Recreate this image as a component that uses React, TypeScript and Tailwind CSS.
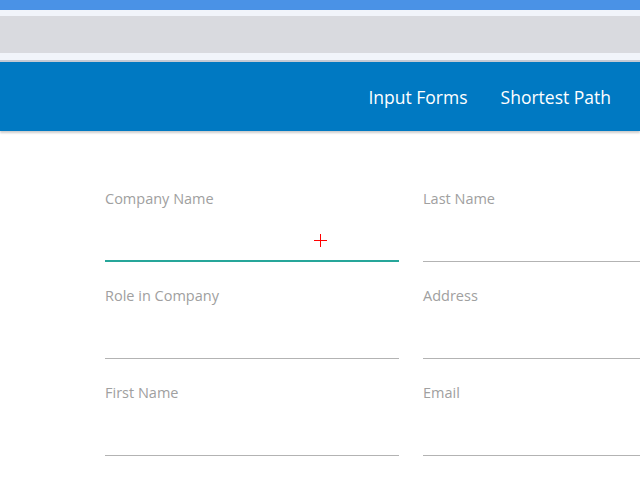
const FIELDS: [string, string][] = [
  ["Company Name", "Last Name"],
  ["Role in Company", "Address"],
  ["First Name", "Email"],
];

function Field({ label, active }: { label: string; active?: boolean }) {
  return (
    <div className="flex w-[294px] shrink-0 flex-col">
      <label className="h-[18px] text-[14.5px] leading-[18px] text-[#a0a0a0]">{label}</label>
      <div
        className={
          active
            ? "mt-[52px] h-[2px] bg-[#26a69a]"
            : "mt-[53px] h-px bg-[#b3b3b3]"
        }
      />
    </div>
  );
}

export default function App() {
  return (
    <div
      className="relative h-[480px] w-[640px] overflow-hidden bg-white"
      style={{ fontFamily: "'Open Sans', 'Noto Sans', sans-serif" }}
    >
      <div className="h-[10px] bg-[#4a92e6]" />
      <div className="h-[6px] bg-[#f1f4fa]" />
      <div className="h-[37px] bg-[#d9dadf]" />
      <div className="h-[7px] bg-[#f1f4fa]" />
      <div className="h-[2px] bg-[#c4cad4]" />
      <header className="flex h-[69px] items-center justify-end gap-[33px] bg-[#0079c2] pr-[29px] text-[17.5px] text-white shadow-[0_2px_2px_rgba(0,0,0,0.2)]">
        <a className="mt-[1px]">Input Forms</a>
        <a className="mt-[1px]">Shortest Path</a>
      </header>
      <main className="flex flex-col gap-[25px] pl-[105px] pt-[59px]">
        {FIELDS.map(([left, right], i) => (
          <div key={left} className="flex gap-[24px]">
            <Field label={left} active={i === 0} />
            <Field label={right} />
          </div>
        ))}
      </main>
      <div className="pointer-events-none absolute left-[314px] top-[234px] h-[13px] w-[13px]">
        <div className="absolute left-[6px] top-0 h-[13px] w-px bg-[#ff0000]" />
        <div className="absolute left-0 top-[6px] h-px w-[13px] bg-[#ff0000]" />
      </div>
    </div>
  );
}
